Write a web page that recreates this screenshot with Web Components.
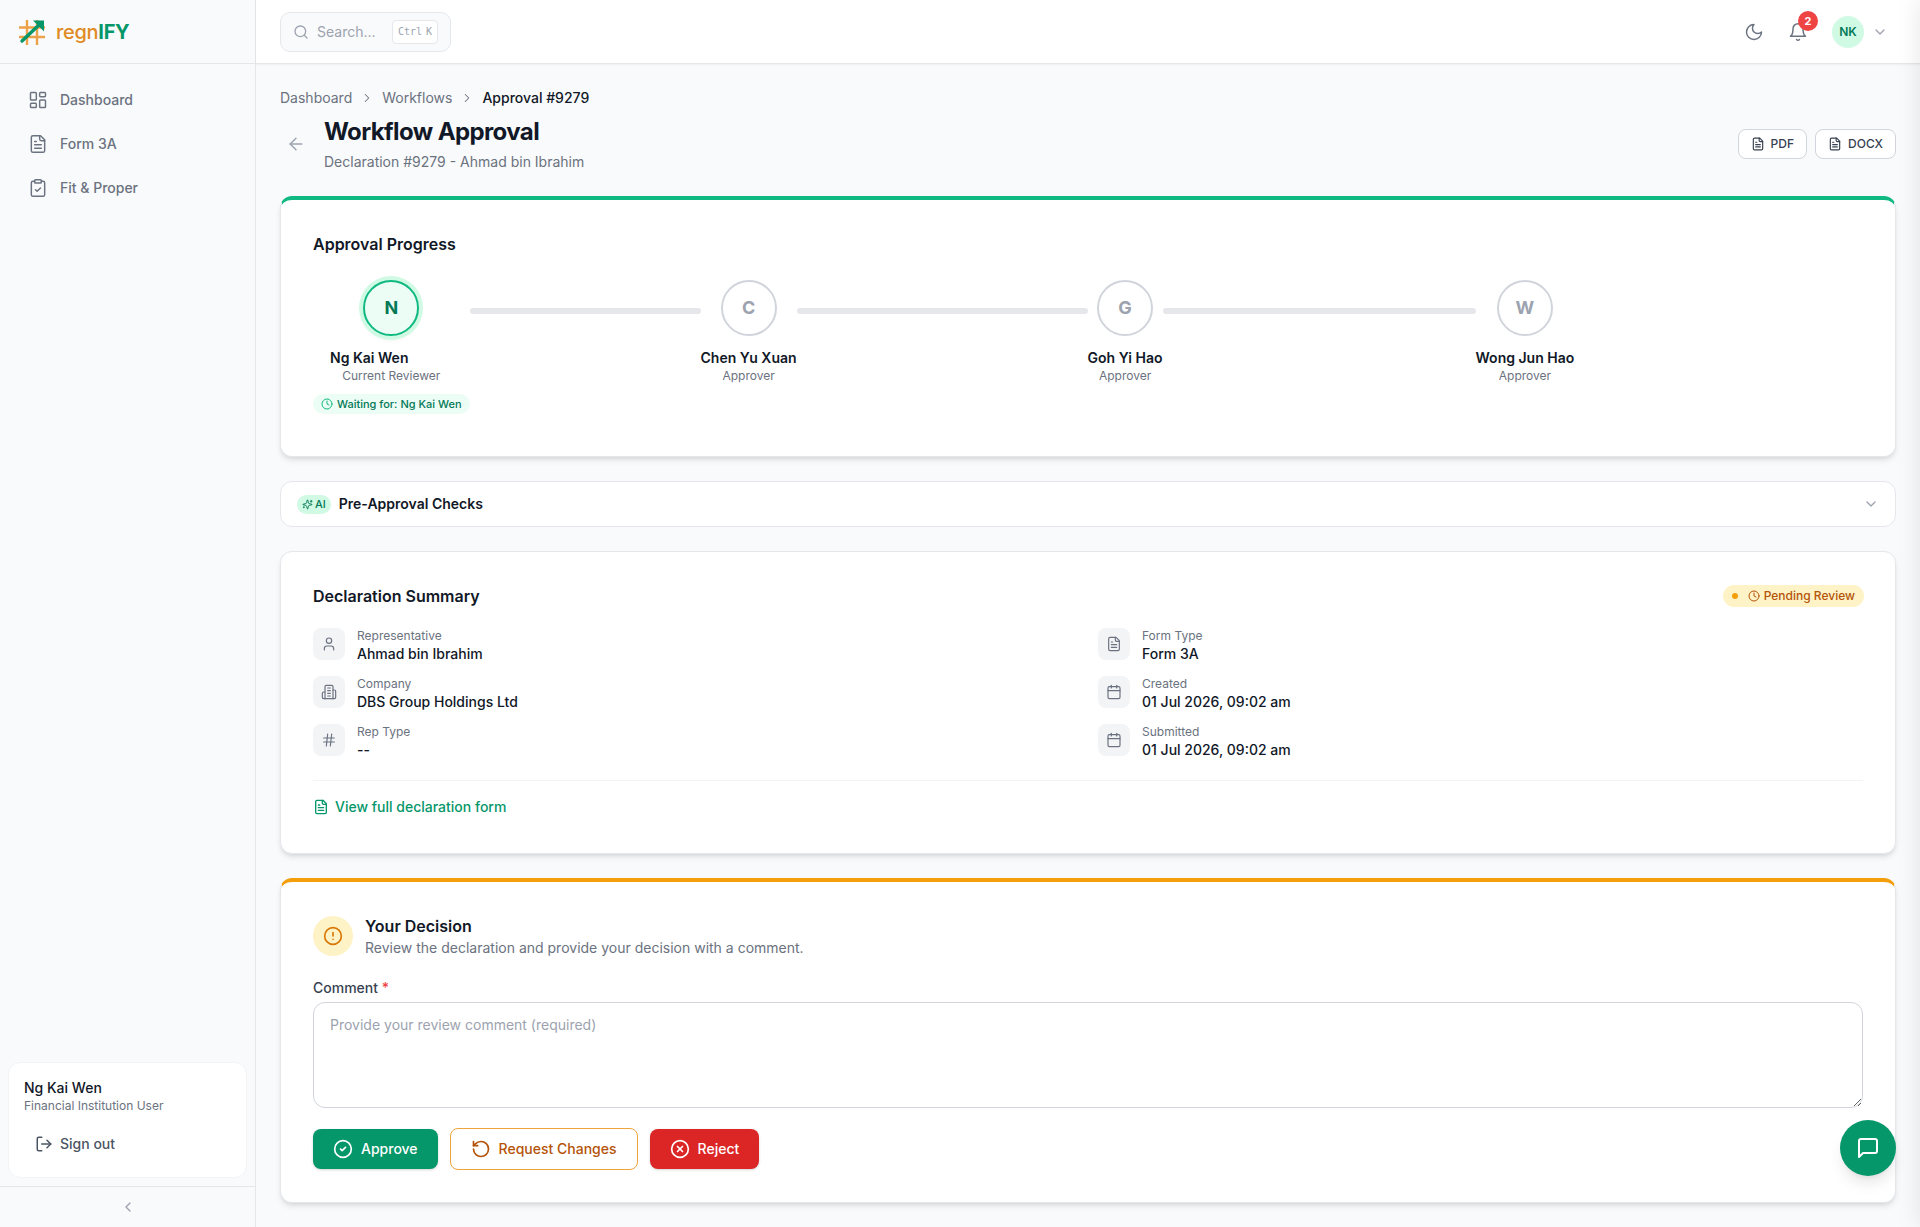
<!DOCTYPE html>
<html lang="en">
<head>
<meta charset="utf-8">
<title>regnIFY - Workflow Approval</title>
<style>
html,body{margin:0;height:100%;overflow:hidden;background:#f9fafb;}
body{font-family:Inter,"Liberation Sans",sans-serif;color:#111827;font-size:14px;line-height:20px;}
</style>
</head>
<body>
<rn-app>
	<rn-sidebar slot="side">
		<rn-nav-item icon="dashboard">Dashboard</rn-nav-item>
		<rn-nav-item icon="file">Form 3A</rn-nav-item>
		<rn-nav-item icon="clipboard">Fit &amp; Proper</rn-nav-item>
	</rn-sidebar>
	<rn-topbar slot="top"></rn-topbar>

	<rn-crumbs></rn-crumbs>
	<rn-page-head title="Workflow Approval" sub="Declaration #9279 - Ahmad bin Ibrahim"></rn-page-head>

	<rn-card accent="#10b981">
		<rn-heading>Approval Progress</rn-heading>
		<rn-stepper>
			<rn-step letter="N" name="Ng Kai Wen" role="Current Reviewer" active></rn-step>
			<rn-link-bar style="--w:231px"></rn-link-bar>
			<rn-step letter="C" name="Chen Yu Xuan" role="Approver"></rn-step>
			<rn-link-bar style="--w:291px"></rn-link-bar>
			<rn-step letter="G" name="Goh Yi Hao" role="Approver"></rn-step>
			<rn-link-bar style="--w:313px"></rn-link-bar>
			<rn-step letter="W" name="Wong Jun Hao" role="Approver"></rn-step>
		</rn-stepper>
	</rn-card>

	<rn-accordion>Pre-Approval Checks</rn-accordion>

	<rn-card>
		<rn-summary-head>Declaration Summary</rn-summary-head>
		<rn-info-grid>
			<rn-info icon="user" label="Representative">Ahmad bin Ibrahim</rn-info>
			<rn-info icon="file" label="Form Type">Form 3A</rn-info>
			<rn-info icon="building" label="Company">DBS Group Holdings Ltd</rn-info>
			<rn-info icon="calendar" label="Created">01 Jul 2026, 09:02 am</rn-info>
			<rn-info icon="hash" label="Rep Type">--</rn-info>
			<rn-info icon="calendar" label="Submitted">01 Jul 2026, 09:02 am</rn-info>
		</rn-info-grid>
		<rn-form-link>View full declaration form</rn-form-link>
	</rn-card>

	<rn-card accent="#f59e0b">
		<rn-decision></rn-decision>
	</rn-card>
</rn-app>
<rn-chat-fab></rn-chat-fab>
<rn-drawer-edge></rn-drawer-edge>

<script>
'use strict';

const ICONS = {
	dashboard:'<rect x="3" y="3" width="7" height="9" rx="1"/><rect x="14" y="3" width="7" height="5" rx="1"/><rect x="14" y="12" width="7" height="9" rx="1"/><rect x="3" y="16" width="7" height="5" rx="1"/>',
	file:'<path d="M15 2H6a2 2 0 0 0-2 2v16a2 2 0 0 0 2 2h12a2 2 0 0 0 2-2V7Z"/><path d="M14 2v4a2 2 0 0 0 2 2h4"/><path d="M10 9H8"/><path d="M16 13H8"/><path d="M16 17H8"/>',
	clipboard:'<rect x="8" y="2" width="8" height="4" rx="1"/><path d="M16 4h2a2 2 0 0 1 2 2v14a2 2 0 0 1-2 2H6a2 2 0 0 1-2-2V6a2 2 0 0 1 2-2h2"/><path d="m9 14 2 2 4-4"/>',
	search:'<circle cx="11" cy="11" r="8"/><path d="m21 21-4.3-4.3"/>',
	moon:'<path d="M12 3a6 6 0 0 0 9 9 9 9 0 1 1-9-9Z"/>',
	bell:'<path d="M6 8a6 6 0 0 1 12 0c0 7 3 9 3 9H3s3-2 3-9"/><path d="M10.3 21a1.94 1.94 0 0 0 3.4 0"/>',
	down:'<path d="m6 9 6 6 6-6"/>',
	right:'<path d="m9 18 6-6-6-6"/>',
	left:'<path d="m15 18-6-6 6-6"/>',
	back:'<path d="m12 19-7-7 7-7"/><path d="M19 12H5"/>',
	clock:'<circle cx="12" cy="12" r="10"/><path d="M12 6v6l4 2"/>',
	user:'<path d="M19 21v-2a4 4 0 0 0-4-4H9a4 4 0 0 0-4 4v2"/><circle cx="12" cy="7" r="4"/>',
	building:'<path d="M6 22V4a2 2 0 0 1 2-2h8a2 2 0 0 1 2 2v18Z"/><path d="M6 12H4a2 2 0 0 0-2 2v6a2 2 0 0 0 2 2h2"/><path d="M18 9h2a2 2 0 0 1 2 2v9a2 2 0 0 1-2 2h-2"/><path d="M10 6h4"/><path d="M10 10h4"/><path d="M10 14h4"/><path d="M10 18h4"/>',
	hash:'<path d="M4 9h16"/><path d="M4 15h16"/><path d="M10 3 8 21"/><path d="M16 3l-2 18"/>',
	calendar:'<path d="M8 2v4"/><path d="M16 2v4"/><rect x="3" y="4" width="18" height="18" rx="2"/><path d="M3 10h18"/>',
	alert:'<circle cx="12" cy="12" r="10"/><path d="M12 8v4"/><path d="M12 16h.01"/>',
	check:'<circle cx="12" cy="12" r="10"/><path d="m9 12 2 2 4-4"/>',
	undo:'<path d="M3 12a9 9 0 1 0 9-9 9.75 9.75 0 0 0-6.74 2.74L3 8"/><path d="M3 3v5h5"/>',
	cross:'<circle cx="12" cy="12" r="10"/><path d="m15 9-6 6"/><path d="m9 9 6 6"/>',
	logout:'<path d="M9 21H5a2 2 0 0 1-2-2V5a2 2 0 0 1 2-2h4"/><path d="m16 17 5-5-5-5"/><path d="M21 12H9"/>',
	chat:'<path d="M21 15a2 2 0 0 1-2 2H7l-4 4V5a2 2 0 0 1 2-2h14a2 2 0 0 1 2 2z"/>',
	sparkle:'<path d="M9.9 15.5A2 2 0 0 0 8.500 14.100l-6.100-1.600a.5.5 0 0 1 0-1l6.100-1.600A2 2 0 0 0 9.900 8.500l1.600-6.100a.5.5 0 0 1 1 0l1.600 6.100a2 2 0 0 0 1.400 1.400l6.100 1.600a.5.5 0 0 1 0 1l-6.100 1.600a2 2 0 0 0-1.400 1.400l-1.600 6.100a.5.5 0 0 1-1 0z"/><path d="M20 3v4"/><path d="M22 5h-4"/><path d="M4 17v2"/><path d="M5 18H3"/>'
};

function icon(name,size,width){
	return `<svg width="${size}" height="${size}" viewBox="0 0 24 24" fill="none" stroke="currentColor" stroke-width="${width||2}" stroke-linecap="round" stroke-linejoin="round" style="display:block;flex:none">${ICONS[name]}</svg>`;
}

// every element is a shadow root filled from its InitialCss and Template
class RnElement extends HTMLElement {
	constructor(){
		super();
		this.attachShadow({mode: 'open'});
	}
	connectedCallback(){
		this.shadowRoot.innerHTML = `<style>${this.InitialCss}</style>${this.Template}`;
	}
	get InitialCss(){ return ':host{display:block;}'; }
	get Template(){ return '<slot></slot>'; }
	attr(name){ return this.getAttribute(name) || ''; }
}

class RnApp extends RnElement {
	get InitialCss(){
		return `
:host{display:grid;grid-template-columns:256px 1fr;grid-template-rows:64px 1fr;height:100vh;}
.side{grid-row:1 / 3;min-height:0;}
main{min-height:0;overflow:hidden;padding:24px 24px 0;display:flex;flex-direction:column;}
		`;
	}
	get Template(){
		return `
<div class="side"><slot name="side"></slot></div>
<slot name="top"></slot>
<main><slot></slot></main>
		`;
	}
}

class RnSidebar extends RnElement {
	get InitialCss(){
		return `
:host{display:flex;flex-direction:column;height:100vh;box-sizing:border-box;background:#f9fafb;border-right:1px solid #e5e7eb;}
.logo{height:64px;box-sizing:border-box;border-bottom:1px solid #e5e7eb;display:flex;align-items:center;gap:11px;padding-left:19px;}
.word{font-size:20px;font-weight:500;color:#e08a24;letter-spacing:-.3px;}
.word b{font-weight:700;color:#059669;}
nav{padding:16px 16px 0;display:flex;flex-direction:column;gap:4px;flex:1;}
.me{margin:0 8px 8px;height:116px;box-sizing:border-box;padding:15px 15px 0;background:#fff;border:1px solid #f3f4f6;border-radius:12px;}
.name{font-weight:500;line-height:20px;}
.role{font-size:12px;line-height:16px;color:#6b7280;}
.out{display:flex;align-items:center;gap:7px;height:40px;margin-top:10px;padding-left:11px;color:#4b5563;font-weight:500;}
.foot{height:41px;box-sizing:border-box;border-top:1px solid #e5e7eb;display:flex;align-items:center;justify-content:center;color:#9ca3af;}
		`;
	}
	get Template(){
		return `
<div class="logo">
	<svg width="26" height="26" viewBox="0 0 26 26" fill="none" style="display:block;flex:none">
		<path d="M8 1v25M18 1v25M0 8.500h26M0 18h26" stroke="#eda148" stroke-width="2.400"/>
		<path d="M3 22 21 5" stroke="#059669" stroke-width="3.400" stroke-linecap="round"/>
		<path d="M14 1.500h11v11z" fill="#059669"/>
	</svg>
	<span class="word">regn<b>IFY</b></span>
</div>
<nav><slot></slot></nav>
<div class="me">
	<div class="name">Ng Kai Wen</div>
	<div class="role">Financial Institution User</div>
	<div class="out">${icon('logout',18)}<span>Sign out</span></div>
</div>
<div class="foot">${icon('left',16,2)}</div>
		`;
	}
}

class RnNavItem extends RnElement {
	get InitialCss(){
		return `
:host{display:flex;align-items:center;gap:12px;height:40px;padding-left:12px;color:#6b7280;font-weight:500;}
		`;
	}
	get Template(){
		return `${icon(this.attr('icon'),20,1.75)}<slot></slot>`;
	}
}

class RnTopbar extends RnElement {
	get InitialCss(){
		return `
:host{display:flex;align-items:center;justify-content:space-between;box-sizing:border-box;height:64px;padding:0 24px;background:#fff;border-bottom:1px solid #e5e7eb;box-shadow:0 1px 2px rgba(0,0,0,.05);}
.search{display:flex;align-items:center;gap:8px;width:171px;height:40px;box-sizing:border-box;padding:0 12px;background:#f9fafb;border:1px solid #e5e7eb;border-radius:10px;color:#9ca3af;}
.search span{flex:1;}
kbd{display:flex;gap:4px;align-items:center;height:24px;box-sizing:border-box;padding:0 5px;background:#fff;border:1px solid #e5e7eb;border-radius:4px;font:10px "DejaVu Sans Mono",monospace;color:#9ca3af;}
.right{display:flex;align-items:center;gap:8px;}
.btn{position:relative;width:36px;height:36px;display:flex;align-items:center;justify-content:center;color:#6b7280;}
.count{position:absolute;top:-3px;right:-2px;width:20px;height:20px;border-radius:50%;background:#ef4444;color:#fff;font-size:11px;font-weight:700;line-height:20px;text-align:center;}
.who{display:flex;align-items:center;gap:8px;padding:0 8px;color:#9ca3af;}
.avatar{width:32px;height:32px;border-radius:50%;background:#d1fae5;color:#047857;font-size:12px;font-weight:600;display:flex;align-items:center;justify-content:center;}
		`;
	}
	get Template(){
		return `
<div class="search">${icon('search',16)}<span>Search...</span><kbd><i style="font-style:normal">Ctrl</i><i style="font-style:normal">K</i></kbd></div>
<div class="right">
	<div class="btn">${icon('moon',20,1.75)}</div>
	<div class="btn">${icon('bell',20,1.75)}<div class="count">2</div></div>
	<div class="who"><div class="avatar">NK</div>${icon('down',16,2)}</div>
</div>
		`;
	}
}

class RnCrumbs extends RnElement {
	get InitialCss(){
		return `
:host{display:flex;align-items:center;gap:8px;color:#6b7280;height:20px;flex:none;}
b{font-weight:500;color:#111827;}
		`;
	}
	get Template(){
		let sep = icon('right',14,1.75);
		return `<span>Dashboard</span>${sep}<span>Workflows</span>${sep}<b>Approval #9279</b>`;
	}
}

class RnPageHead extends RnElement {
	get InitialCss(){
		return `
:host{display:flex;align-items:center;margin:8px 0 24px;flex:none;}
.back{width:32px;height:32px;display:flex;align-items:center;justify-content:center;color:#9ca3af;margin-right:12px;}
.txt{flex:1;}
h1{margin:0;font-size:24px;line-height:32px;font-weight:700;letter-spacing:-.6px;color:#111827;}
p{margin:4px 0 0;color:#6b7280;}
.acts{display:flex;gap:8px;}
.acts div{display:flex;align-items:center;gap:6px;height:30px;box-sizing:border-box;padding:0 12px;background:#fff;border:1px solid #d1d5db;border-radius:8px;font-size:12px;font-weight:500;color:#374151;}
		`;
	}
	get Template(){
		return `
<div class="back">${icon('back',20,1.75)}</div>
<div class="txt"><h1>${this.attr('title')}</h1><p>${this.attr('sub')}</p></div>
<div class="acts"><div>${icon('file',14)}PDF</div><div>${icon('file',14)}DOCX</div></div>
		`;
	}
}

class RnCard extends RnElement {
	get InitialCss(){
		let top = this.attr('accent');
		return `
:host{display:block;flex:none;box-sizing:border-box;padding:32px;margin-bottom:24px;background:#fff;border:1px solid #e5e7eb;${top ? `border-top:4px solid ${top};` : ''}border-radius:12px;box-shadow:0 4px 6px -1px rgba(0,0,0,.1),0 2px 4px -2px rgba(0,0,0,.1);}
		`;
	}
}

class RnHeading extends RnElement {
	get InitialCss(){
		return `:host{display:block;font-size:16px;line-height:24px;font-weight:600;color:#111827;margin-bottom:24px;}`;
	}
}

class RnStepper extends RnElement {
	get InitialCss(){
		return `:host{display:flex;align-items:flex-start;padding-bottom:10px;}`;
	}
}

class RnLinkBar extends RnElement {
	get InitialCss(){
		return `:host{display:block;flex:none;width:var(--w);height:6px;margin-top:28px;border-radius:3px;background:#e5e7eb;}`;
	}
}

class RnStep extends RnElement {
	get InitialCss(){
		return `
:host{display:flex;flex-direction:column;align-items:center;flex:none;}
.dot{width:56px;height:56px;box-sizing:border-box;border-radius:50%;border:2px solid #d1d5db;background:#fff;color:#9ca3af;font-size:18px;font-weight:700;display:flex;align-items:center;justify-content:center;margin-top:0;}
:host([active]) .dot{border-color:#10b981;background:#ecfdf5;color:#047857;box-shadow:0 0 0 4px #d1fae5,0 4px 6px -1px rgba(0,0,0,.08);}
.name{margin-top:12px;font-weight:600;color:#111827;white-space:nowrap;}
:host([active]) .name{margin-right:44px;}
.role{font-size:12px;line-height:16px;color:#6b7280;}
.wait{display:flex;align-items:center;gap:4px;height:20px;margin-top:10px;padding:0 8px;border-radius:10px;background:#ecfdf5;color:#047857;font-size:11px;font-weight:500;white-space:nowrap;}
.wait svg{color:#10b981;}
		`;
	}
	get Template(){
		let wait = this.hasAttribute('active') ? `<div class="wait">${icon('clock',12)}Waiting for: ${this.attr('name')}</div>` : '';
		return `
<div class="dot">${this.attr('letter')}</div>
<div class="name">${this.attr('name')}</div>
<div class="role">${this.attr('role')}</div>
${wait}
		`;
	}
}

class RnAccordion extends RnElement {
	get InitialCss(){
		return `
:host{display:flex;flex:none;align-items:center;gap:8px;box-sizing:border-box;height:46px;padding:0 16px;margin-bottom:24px;background:#fff;border:1px solid #e5e7eb;border-radius:12px;font-weight:600;color:#111827;}
.ai{display:flex;align-items:center;gap:2px;height:19px;box-sizing:border-box;padding:0 5px;border-radius:10px;background:#d1fae5;color:#047857;font-size:11px;font-weight:500;}
.t{flex:1;}
.c{color:#9ca3af;}
		`;
	}
	get Template(){
		return `<div class="ai">${icon('sparkle',11)}AI</div><div class="t"><slot></slot></div><div class="c">${icon('down',16,2)}</div>`;
	}
}

class RnSummaryHead extends RnElement {
	get InitialCss(){
		return `
:host{display:flex;align-items:center;justify-content:space-between;height:24px;margin-bottom:20px;font-size:16px;font-weight:600;color:#111827;}
.pill{display:flex;align-items:center;gap:4px;height:22px;box-sizing:border-box;padding:0 9px;margin-right:-1px;border-radius:11px;background:#fef3c7;color:#b45309;font-size:12px;font-weight:500;}
.dot{width:6px;height:6px;border-radius:50%;background:#f59e0b;margin-right:6px;}
		`;
	}
	get Template(){
		return `<div><slot></slot></div><div class="pill"><span class="dot"></span>${icon('clock',12)}Pending Review</div>`;
	}
}

class RnInfoGrid extends RnElement {
	get InitialCss(){
		return `:host{display:grid;grid-template-columns:1fr 1fr;column-gap:20px;row-gap:12px;}`;
	}
}

class RnInfo extends RnElement {
	get InitialCss(){
		return `
:host{display:flex;gap:12px;align-items:flex-start;}
.box{width:32px;height:32px;border-radius:8px;background:#f3f4f6;color:#6b7280;display:flex;align-items:center;justify-content:center;flex:none;}
.l{font-size:12px;line-height:16px;color:#6b7280;}
.v{font-weight:500;color:#111827;}
		`;
	}
	get Template(){
		return `<div class="box">${icon(this.attr('icon'),16,1.75)}</div><div><div class="l">${this.attr('label')}</div><div class="v"><slot></slot></div></div>`;
	}
}

class RnFormLink extends RnElement {
	get InitialCss(){
		return `
:host{display:flex;align-items:center;gap:6px;margin-top:20px;padding:16px 0 4px;border-top:1px solid #f3f4f6;color:#059669;font-weight:500;}
		`;
	}
	get Template(){
		return `${icon('file',16)}<slot></slot>`;
	}
}

class RnDecision extends RnElement {
	get InitialCss(){
		return `
:host{display:block;}
.head{display:flex;align-items:center;gap:12px;margin-bottom:20px;}
.badge{width:40px;height:40px;border-radius:50%;background:#fef3c7;color:#d97706;display:flex;align-items:center;justify-content:center;}
.t{font-size:16px;line-height:24px;font-weight:600;color:#111827;}
.s{color:#6b7280;}
label{display:block;font-weight:500;color:#374151;margin-bottom:4px;}
label i{font-style:normal;color:#ef4444;}
textarea{display:block;width:100%;height:106px;box-sizing:border-box;padding:12px 16px;border:1px solid #d1d5db;border-radius:12px;font:14px/20px Inter,"Liberation Sans",sans-serif;outline:0;color:#111827;background:#fff;}
textarea::placeholder{color:#9ca3af;opacity:1;}
.btns{display:flex;align-items:center;gap:12px;margin-top:20px;}
		`;
	}
	get Template(){
		return `
<div class="head">
	<div class="badge">${icon('alert',20)}</div>
	<div><div class="t">Your Decision</div><div class="s">Review the declaration and provide your decision with a comment.</div></div>
</div>
<label>Comment <i>*</i></label>
<textarea placeholder="Provide your review comment (required)"></textarea>
<div class="btns">
	<rn-button kind="go" icon="check">Approve</rn-button>
	<rn-button kind="line" icon="undo">Request Changes</rn-button>
	<rn-button kind="stop" icon="cross">Reject</rn-button>
</div>
		`;
	}
}

class RnButton extends RnElement {
	get InitialCss(){
		return `
:host{display:flex;align-items:center;gap:8px;box-sizing:border-box;height:40px;padding:0 20px;border-radius:8px;color:#fff;font-weight:500;box-shadow:0 1px 3px rgba(0,0,0,.15),0 1px 2px -1px rgba(0,0,0,.1);}
:host([kind=go]){background:#059669;}
:host([kind=stop]){background:#dc2626;}
:host([kind=line]){height:42px;background:#fff;border:1px solid #f0a23c;color:#b45309;box-shadow:none;}
		`;
	}
	get Template(){
		return `${icon(this.attr('icon'),20)}<slot></slot>`;
	}
}

class RnChatFab extends RnElement {
	get InitialCss(){
		return `
:host{position:fixed;right:24px;bottom:51px;width:56px;height:56px;border-radius:50%;background:#059669;color:#fff;display:flex;align-items:center;justify-content:center;box-shadow:0 10px 15px -3px rgba(0,0,0,.1),0 4px 6px -4px rgba(0,0,0,.1);}
		`;
	}
	get Template(){
		return icon('chat',24);
	}
}

// the closed drawer sits just past the window, only its shadow shows
class RnDrawerEdge extends RnElement {
	get InitialCss(){
		return `
:host{position:fixed;top:0;left:100%;width:400px;height:100%;box-shadow:0 0 24px rgba(0,0,0,.1);}
		`;
	}
	get Template(){ return ''; }
}

window.customElements.define('rn-app',RnApp);
window.customElements.define('rn-sidebar',RnSidebar);
window.customElements.define('rn-nav-item',RnNavItem);
window.customElements.define('rn-topbar',RnTopbar);
window.customElements.define('rn-crumbs',RnCrumbs);
window.customElements.define('rn-page-head',RnPageHead);
window.customElements.define('rn-card',RnCard);
window.customElements.define('rn-heading',RnHeading);
window.customElements.define('rn-stepper',RnStepper);
window.customElements.define('rn-link-bar',RnLinkBar);
window.customElements.define('rn-step',RnStep);
window.customElements.define('rn-accordion',RnAccordion);
window.customElements.define('rn-summary-head',RnSummaryHead);
window.customElements.define('rn-info-grid',RnInfoGrid);
window.customElements.define('rn-info',RnInfo);
window.customElements.define('rn-form-link',RnFormLink);
window.customElements.define('rn-decision',RnDecision);
window.customElements.define('rn-button',RnButton);
window.customElements.define('rn-chat-fab',RnChatFab);
window.customElements.define('rn-drawer-edge',RnDrawerEdge);
</script>
</body>
</html>
